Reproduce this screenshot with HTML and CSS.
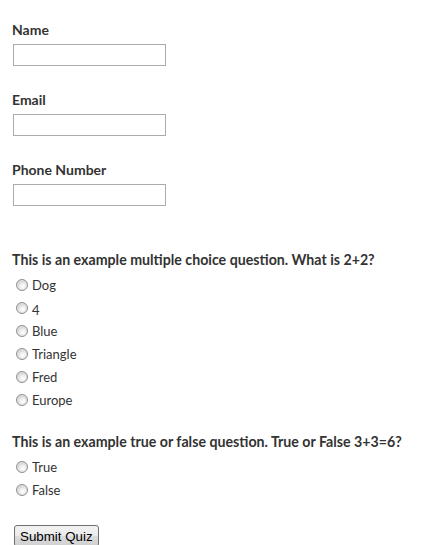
FILE: index.html
```html
<!DOCTYPE html>
<html>
<head>
<meta charset="utf-8">
<link rel="stylesheet" href="styles.css">
</head>
<body>
<form class="quiz">
  <div class="field">
    <label class="field-label">Name</label>
    <input class="text-input" type="text">
  </div>
  <div class="field">
    <label class="field-label">Email</label>
    <input class="text-input" type="text">
  </div>
  <div class="field">
    <label class="field-label">Phone Number</label>
    <input class="text-input" type="text">
  </div>

  <div class="question q-first">
    <div class="question-text">This is an example multiple choice question. What is 2+2?</div>
    <label class="option"><input class="radio" type="radio" name="q1">Dog</label>
    <label class="option"><input class="radio" type="radio" name="q1"><span class="num">4</span></label>
    <label class="option"><input class="radio" type="radio" name="q1">Blue</label>
    <label class="option"><input class="radio" type="radio" name="q1">Triangle</label>
    <label class="option"><input class="radio" type="radio" name="q1">Fred</label>
    <label class="option"><input class="radio" type="radio" name="q1">Europe</label>
  </div>

  <div class="question q-second">
    <div class="question-text">This is an example true or false question. True or False 3+3=6?</div>
    <label class="option"><input class="radio" type="radio" name="q2">True</label>
    <label class="option"><input class="radio" type="radio" name="q2">False</label>
  </div>

  <button class="submit" type="button">Submit Quiz</button>
</form>
</body>
</html>
```
FILE: styles.css
```css
html, body {
  margin: 0;
  padding: 0;
  background: #ffffff;
}

.quiz {
  padding: 22px 0 0 12px;
  font-family: Lato, "Open Sans", sans-serif;
  color: #333333;
}

.field {
  display: flex;
  flex-direction: column;
  align-items: flex-start;
  margin-bottom: 26px;
}

.field-label {
  font-size: 14px;
  font-weight: bold;
  line-height: 16px;
  margin-bottom: 6px;
}

.text-input {
  box-sizing: border-box;
  width: 153px;
  height: 22px;
  margin: 0 0 0 1px;
  border: 1px solid #ababab;
  padding: 0 3px;
  font-size: 13px;
  background: #ffffff;
}

.q-first {
  margin-top: 46px;
}

.q-second {
  margin-top: 23px;
}

.question-text {
  font-size: 14.2px;
  font-weight: bold;
  line-height: 16px;
  margin-bottom: 5px;
}

.option {
  display: flex;
  align-items: center;
  height: 23px;
  padding-left: 4px;
  font-size: 13px;
  color: #333333;
}

.num {
  position: relative;
  top: 2px;
}

.radio {
  appearance: none;
  -webkit-appearance: none;
  box-sizing: border-box;
  width: 12px;
  height: 12px;
  margin: 0 4px 0 0;
  border-radius: 50%;
  border: 1px solid #8f8f8f;
  background: radial-gradient(circle at 60% 65%, #ffffff 0%, #eeeeee 35%, #c8c8c8 75%, #b4b4b4 100%);
  box-shadow: inset 0 0 0 1px #e6e6e6;
}

.submit {
  margin: 24px 0 0 2px;
  height: 22px;
  padding: 0 5px;
  font-family: "Liberation Sans", Arial, sans-serif;
  font-size: 13.33px;
  color: #000000;
  border: 1px solid #707070;
  border-radius: 3px;
  background: linear-gradient(#f2f2f2 0%, #ebebeb 50%, #dddddd 51%, #cfcfcf 100%);
}
```
